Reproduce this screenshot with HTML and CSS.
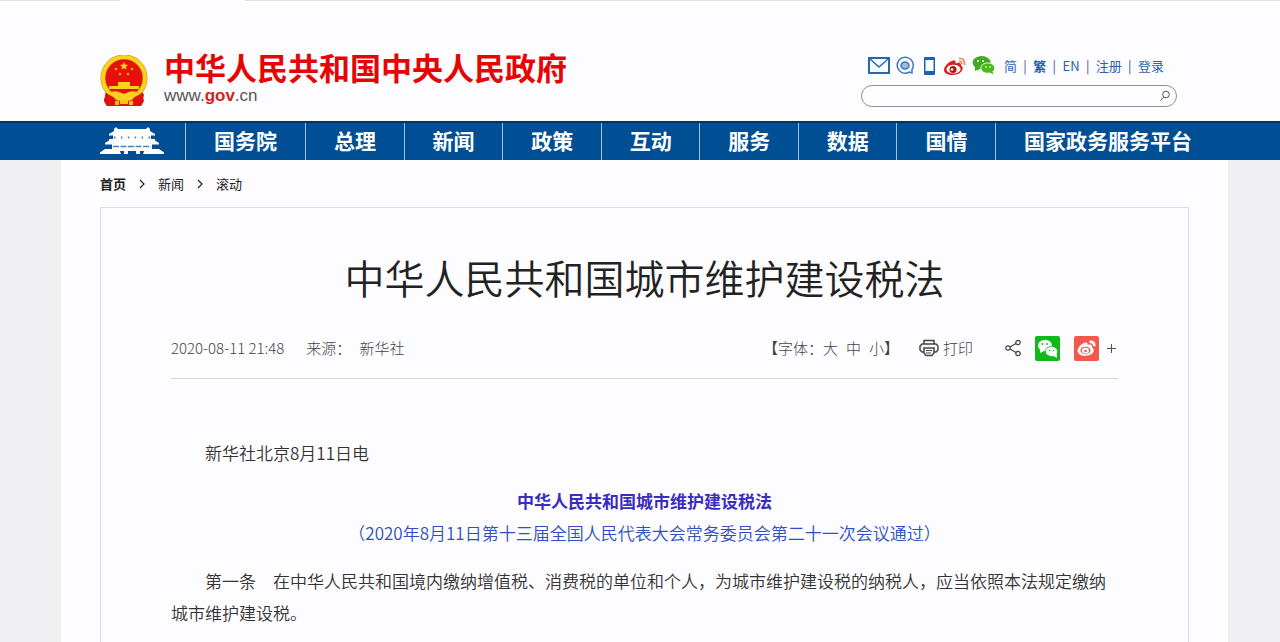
FILE: index.html
```html
<!DOCTYPE html>
<html lang="zh-CN">
<head>
    <meta charset="UTF-8">
    <meta name="viewport" content="width=device-width, initial-scale=1.0">
    <title>中华人民共和国城市维护建设税法</title>
    <link rel="stylesheet" href="styles.css">
</head>
<body>
    <header class="header">
        <a href="#" class="logo">
            <svg class="emblem" viewBox="0 0 48 52" aria-hidden="true">
                <path d="M6 36 L42 36 L44 40 L41 51 L7 51 L4 46 Z" fill="#e01010"/>
                <circle cx="24" cy="23" r="21" fill="#e8100c" stroke="#c98a08" stroke-width="5"/>
                <circle cx="24" cy="23" r="21" fill="none" stroke="#fbd31c" stroke-width="4"/>
                <path d="M24 7l1.2 2.6 2.8.3-2.1 1.9.6 2.8-2.5-1.4-2.5 1.4.6-2.8-2.1-1.9 2.8-.3z" fill="#fbd31c"/>
                <g fill="#fbb81c">
                    <circle cx="16" cy="14" r="1.2"/>
                    <circle cx="32" cy="14" r="1.2"/>
                    <circle cx="20" cy="19" r="1.2"/>
                    <circle cx="28" cy="19" r="1.2"/>
                </g>
                <path d="M18 27h12v4H18zM9 31h30v3H9z" fill="#fbd31c"/>
                <path d="M6 38L15 43L13 51H7L4 46ZM42 38L33 43L35 51H41L44 46Z" fill="#e01010"/>
                <path d="M11 37 Q17 35 24 39 Q31 35 37 37 L33 43 Q28 40 24 43 Q20 40 15 43 Z" fill="#fbd31c"/>
                <path d="M15 46h4v4h-4zM29 46h4v4h-4zM20 46q4-4 8 0v3h-8z" fill="#fbc31c"/>
            </svg>
            <span class="logo-text">
                <strong class="logo-name">中华人民共和国中央人民政府</strong>
                <span class="logo-url">www.<b>gov</b>.cn</span>
            </span>
        </a>
        <div class="tools">
            <div class="quick-links">
                <a href="#" class="icon-link" aria-label="邮箱">
                    <svg width="24" height="20" viewBox="0 0 24 20" fill="none" stroke="#2468b4" stroke-width="2">
                        <rect x="2" y="2" width="20" height="15"/>
                        <path d="M3 3l9 8 9-8" stroke-width="1.5"/>
                    </svg>
                </a>
                <a href="#" class="icon-link" aria-label="消息">
                    <svg width="20" height="20" viewBox="0 0 20 20" fill="none" stroke="#3a78bc" stroke-width="1.500">
                        <path d="M14.500 16A8 8 0 1 1 17 13.500V17z"/>
                        <ellipse cx="10" cy="9.500" rx="4" ry="3.500" fill="#98bade"/>
                    </svg>
                </a>
                <a href="#" class="icon-link" aria-label="手机版">
                    <svg width="20" height="20" viewBox="0 0 20 20">
                        <rect x="5" y="1" width="11" height="18" rx="1" fill="#1d62b2"/>
                        <rect x="6.500" y="4" width="8" height="11" fill="#fff"/>
                    </svg>
                </a>
                <a href="#" class="icon-link" aria-label="微博">
                    <svg width="24" height="20" viewBox="0 0 24 20">
                        <path d="M9 5C12 4 13 5 12.500 7.500C16 6 18.500 7 18 9.500C21 11 20 16 15 18C9 20.500 1 18.500 1 14C1 10.500 5.500 6 9 5z" fill="#d9201c"/>
                        <ellipse cx="10.500" cy="13.200" rx="7" ry="4.400" fill="#fff"/>
                        <circle cx="10" cy="13.500" r="3.500" fill="#b51410"/>
                        <circle cx="9" cy="13.500" r="1.300" fill="#fff"/>
                        <path d="M16 2.500Q22 2 21.500 9M16 5.500Q19 5 18.700 8" fill="none" stroke="#f0896a" stroke-width="1.700"/>
                    </svg>
                </a>
                <a href="#" class="icon-link" aria-label="微信">
                    <svg width="25" height="20" viewBox="0 0 25 20">
                        <path d="M4 11a9 6.500 0 1 1 5 2L4 15z" fill="#43aa24"/>
                        <path d="M22 15.500a7 5.200 0 1 0-3 1.500l4 2z" fill="#4cb81c" stroke="#fff" stroke-width=".8"/>
                        <g fill="#fff">
                            <circle cx="7" cy="5" r="1"/>
                            <circle cx="12" cy="5" r="1"/>
                            <circle cx="15" cy="11" r=".8"/>
                            <circle cx="19" cy="11" r=".8"/>
                        </g>
                    </svg>
                </a>
                <a href="#" class="first">简</a><i>|</i>
                <a href="#" class="strong">繁</a><i>|</i>
                <a href="#">EN</a><i>|</i>
                <a href="#">注册</a><i>|</i>
                <a href="#">登录</a>
            </div>
            <form class="search">
                <input type="text" class="search-input" aria-label="搜索">
                <button type="button" class="search-btn" aria-label="搜索">
                    <svg width="12" height="12" viewBox="0 0 12 12" fill="none" stroke="#555" stroke-width="1">
                        <circle cx="7" cy="4.500" r="3.300"/>
                        <path d="M4.700 7L1.500 10.500"/>
                    </svg>
                </button>
            </form>
        </div>
    </header>

    <nav class="navbar">
        <a href="#" class="nav-home" aria-label="首页">
            <svg width="64" height="28" viewBox="0 0 64 28" aria-hidden="true">
                <g fill="#fff">
                    <path d="M16 0l2 2h28l2-2 2 2v2l5 3v1.500H9V7l5-3V2z"/>
                    <path d="M13 8h38v5H13z"/>
                    <path d="M9 12h46v1.500l4 2.500v1.500H5V16l4-2.500z"/>
                    <path d="M12 17h40v5H12z"/>
                    <path d="M0 27v-1.500l5-3.500h14l2 5zM64 27v-1.500L59 22H45l-2 5z"/>
                    <path d="M19 22h26v2H19zM24 22h4v5h-4zM36 22h4v5h-4z"/>
                </g>
                <path d="M14 10.500h36" stroke="#4a80b2" stroke-width="2" stroke-dasharray="1.500 5.400"/>
                <path d="M13 19.500h38" stroke="#4a80b2" stroke-width="1.500" stroke-dasharray="6 1.500"/>
            </svg>
        </a>
        <a href="#" class="nav-link">国务院</a>
        <a href="#" class="nav-link">总理</a>
        <a href="#" class="nav-link">新闻</a>
        <a href="#" class="nav-link">政策</a>
        <a href="#" class="nav-link">互动</a>
        <a href="#" class="nav-link">服务</a>
        <a href="#" class="nav-link">数据</a>
        <a href="#" class="nav-link">国情</a>
        <a href="#" class="nav-link">国家政务服务平台</a>
    </nav>

    <main class="page">
        <div class="breadcrumb">
            <a href="#" class="strong">首页</a>
            <svg width="6" height="10" viewBox="0 0 6 10"><path d="M1 1l4 4-4 4" fill="none" stroke="#222" stroke-width="1.200"/></svg>
            <a href="#">新闻</a>
            <svg width="6" height="10" viewBox="0 0 6 10"><path d="M1 1l4 4-4 4" fill="none" stroke="#222" stroke-width="1.200"/></svg>
            <a href="#">滚动</a>
        </div>

        <article class="article">
            <h1>中华人民共和国城市维护建设税法</h1>
            <div class="meta">
                <span class="date">2020-08-11 21:48</span>
                <span class="source">来源：</span>
                <span class="agency">新华社</span>
                <div class="font-size">
                    <b>【</b>字体：<a href="#">大</a><a href="#">中</a><a href="#">小</a><b>】</b>
                </div>
                <button type="button" class="print-btn">
                    <svg width="20" height="18" viewBox="0 0 20 18" fill="none" stroke="#444" stroke-width="1.500">
                        <path d="M5 5V1.500h10V5"/>
                        <path d="M5 13H3L1 11V7l2-2h14l2 2v4l-2 2h-2"/>
                        <path d="M5 9h10v5l-2 2.500H7L5 14z"/>
                        <path d="M7 11.500h6M7 14h5" stroke-width="1"/>
                    </svg>
                    打印
                </button>
                <div class="share">
                    <svg width="16" height="18" viewBox="0 0 16 18" fill="none" stroke="#444" stroke-width="1.200">
                        <circle cx="3" cy="9" r="2.200"/>
                        <circle cx="13" cy="3.500" r="2.200"/>
                        <circle cx="13" cy="14.500" r="2.200"/>
                        <path d="M5 8l6-3.500M5 10l6 3.500"/>
                    </svg>
                    <a href="#" aria-label="分享到微信">
                        <svg width="25" height="25" viewBox="0 0 25 25">
                            <rect width="25" height="25" rx="2" fill="#10b818"/>
                            <ellipse cx="10" cy="9.500" rx="7" ry="5.800" fill="#fff"/>
                            <path d="M5 13v4l4-2z" fill="#fff"/>
                            <ellipse cx="16.500" cy="15.500" rx="6.200" ry="5" fill="#fff" stroke="#10b818" stroke-width=".8"/>
                            <path d="M18 20l4 2v-4z" fill="#fff"/>
                            <g fill="#10b818">
                                <circle cx="7.500" cy="8" r=".9"/>
                                <circle cx="12" cy="8" r=".9"/>
                                <circle cx="14.500" cy="14.500" r=".7"/>
                                <circle cx="18.500" cy="14.500" r=".7"/>
                            </g>
                        </svg>
                    </a>
                    <a href="#" class="weibo" aria-label="分享到微博">
                        <svg width="25" height="25" viewBox="0 0 25 25">
                            <rect width="25" height="25" rx="2" fill="#f4574c"/>
                            <path d="M10 7C13 6 14 7 13.500 9C17 8 18.500 9 18 11.500C21 13 20 17.500 16 19C10 21 3.500 19 3.500 15C3.500 12 7 8 10 7z" fill="#fff"/>
                            <ellipse cx="11.500" cy="14.500" rx="5" ry="3.800" fill="#f4574c"/>
                            <ellipse cx="11.500" cy="14.800" rx="3.500" ry="3" fill="#fff"/>
                            <circle cx="11.500" cy="15" r="1.300" fill="#f4574c"/>
                            <path d="M15.500 4.500Q22 3.500 21.500 10.500L19 10Q19 7 15.500 7z" fill="#fff"/>
                        </svg>
                    </a>
                    <button type="button" class="more-btn" aria-label="更多">
                        <svg width="9" height="9" viewBox="0 0 9 9"><path d="M4.500 0v9M0 4.500h9" stroke="#555" stroke-width="1"/></svg>
                    </button>
                </div>
            </div>

            <div class="content">
                <p>新华社北京8月11日电</p>
                <h2>中华人民共和国城市维护建设税法</h2>
                <p class="passed">（2020年8月11日第十三届全国人民代表大会常务委员会第二十一次会议通过）</p>
                <p>第一条　在中华人民共和国境内缴纳增值税、消费税的单位和个人，为城市维护建设税的纳税人，应当依照本法规定缴纳城市维护建设税。</p>
            </div>
        </article>
    </main>
</body>
</html>
```
FILE: styles.css
```css
* {
    box-sizing: border-box;
}

body {
    margin: 0;
    background-color: #efeef0;
    color: #333;
    font-family: "Noto Sans CJK SC", sans-serif;
    font-size: 15px;
}

a {
    color: inherit;
    text-decoration: none;
}

svg {
    display: block;
    flex: none;
}

button {
    padding: 0;
    border: none;
    background: none;
    color: inherit;
    font: inherit;
    cursor: pointer;
}

.strong {
    font-weight: bold;
}

/* Header */
.header {
    display: flex;
    justify-content: space-between;
    padding: 46px 103px 14px 100px;
    background: linear-gradient(to right, #e2e0e2 120px, #fdfcff 120px, #fdfcff 245px, #e2e0e2 245px) top / 100% 1px no-repeat #fdfcff;
}

.logo {
    display: flex;
    gap: 16px;
}

.emblem {
    width: 48px;
    height: 52px;
    margin-top: 9px;
}

.logo-text {
    display: flex;
    flex-direction: column;
}

.logo-name {
    color: #e60505;
    font-size: 31px;
    line-height: 42px;
}

.logo-url {
    color: #555;
    font-family: "Liberation Sans", sans-serif;
    font-size: 17px;
    line-height: 16px;
}

.logo-url b {
    color: #d8201c;
}

.tools {
    width: 316px;
    padding-top: 9px;
}

.quick-links {
    display: flex;
    align-items: center;
    height: 22px;
    padding: 0 13px 0 6px;
    color: #2a62a8;
    font-size: 13px;
    line-height: 20px;
    white-space: nowrap;
}

.quick-links i {
    flex: 1;
    color: #5a4c98;
    font-style: normal;
    text-align: center;
}

.quick-links .first {
    margin-left: 4px;
}

.icon-link {
    margin-right: 4px;
}

.search {
    display: flex;
    align-items: center;
    height: 22px;
    margin-top: 8px;
    padding: 0 5px 0 12px;
    border: 1px solid #909090;
    border-radius: 11px;
}

.search-input {
    flex: 1;
    min-width: 0;
    border: none;
    outline: none;
    background: none;
}

/* Navigation */
.navbar {
    display: grid;
    grid-template-columns: 85px 120px repeat(7, 1fr) 198px;
    padding: 0 87px 0 100px;
    border-top: 2px solid #063663;
    background-color: #004e93;
    color: #fff;
    font-size: 21px;
    font-weight: bold;
    line-height: 37px;
}

.nav-home {
    padding-top: 4px;
}

.nav-link {
    padding-left: 28px;
    border-left: 1px solid #a5bfd3;
    line-height: 35px;
    white-space: nowrap;
}

/* Page */
.page {
    margin: 0 52px 0 61px;
    padding: 13px 39px 0;
    background-color: #fdfcff;
}

.navbar {
    min-height: 39px;
}

.breadcrumb {
    display: flex;
    align-items: center;
    gap: 13px;
    color: #222;
    font-size: 13px;
    line-height: 22px;
}

.article {
    margin-top: 12px;
    padding: 39px 70px 20px;
    border: 1px solid #dddce0;
    border-bottom: none;
}

h1 {
    margin: 0;
    color: #222;
    font-size: 40px;
    font-weight: 350;
    line-height: 60px;
    text-align: center;
}

.meta {
    display: flex;
    align-items: center;
    margin-top: 27px;
    padding: 0 2px 16px 0;
    border-bottom: 1px solid #d4d3d6;
    color: #444;
    font-weight: 300;
    line-height: 28px;
    white-space: nowrap;
}

.source {
    margin-left: 22px;
}

.agency {
    margin-left: 8px;
}

.font-size {
    display: flex;
    margin-left: auto;
}

.font-size a + a {
    margin-left: 8px;
}

.print-btn {
    display: flex;
    align-items: center;
    gap: 4px;
    margin-left: 20px;
}

.share {
    display: flex;
    align-items: center;
    gap: 14px;
    margin-left: 32px;
}

.more-btn {
    margin-left: -6px;
}

/* Text of the law */
.content {
    padding-top: 58px;
    font-size: 17px;
    font-weight: 350;
    line-height: 32px;
}

.content p {
    margin: 0 0 16px;
    text-indent: 2em;
}

.content h2 {
    margin: 0;
    color: #3a2cc0;
    font-size: 17px;
    text-align: center;
}

.content .passed {
    color: #2c50c4;
    text-align: center;
    text-indent: 0;
}
```
